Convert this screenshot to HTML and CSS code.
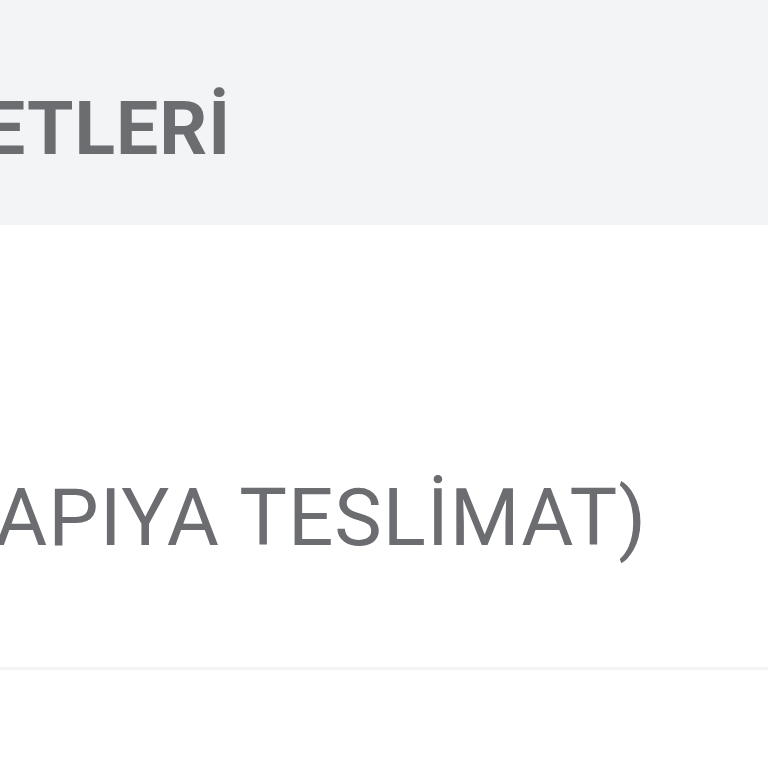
FILE: index.html
```html
<!DOCTYPE html>
<html lang="tr">
<head>
    <meta charset="UTF-8">
    <title>Kargo</title>
    <link rel="stylesheet" href="styles.css">
</head>
<body>
    <table class="rates">
        <thead>
            <tr>
                <th>ETLERİ</th>
            </tr>
        </thead>
        <tbody>
            <tr>
                <td>APIYA TESLİMAT)</td>
            </tr>
            <tr>
                <td class="empty"></td>
            </tr>
        </tbody>
    </table>
</body>
</html>
```

FILE: styles.css
```css
html, body {
    margin: 0;
    padding: 0;
    background: #fff;
    overflow: hidden;
}
.rates {
    width: 768px;
    border-collapse: collapse;
    font-family: Roboto, "Liberation Sans", sans-serif;
    color: #6b6d71;
}
.rates th {
    background: #f3f4f6;
    height: 225px;
    padding: 84px 0 0 0;
    vertical-align: top;
    text-align: left;
    font-size: 75px;
    font-weight: 700;
    line-height: normal;
    letter-spacing: 1px;
    text-indent: -17px;
    box-sizing: border-box;
    white-space: nowrap;
}
.rates td {
    height: 443px;
    padding: 145px 0 0 0;
    font-size: 80px;
    font-weight: 400;
    letter-spacing: 1px;
    text-indent: -5px;
    border-bottom: 3px solid #f3f3f4;
    box-sizing: border-box;
    white-space: nowrap;
}
.rates td.empty {
    height: 100px;
    padding: 0;
    border-bottom: none;
}
```
